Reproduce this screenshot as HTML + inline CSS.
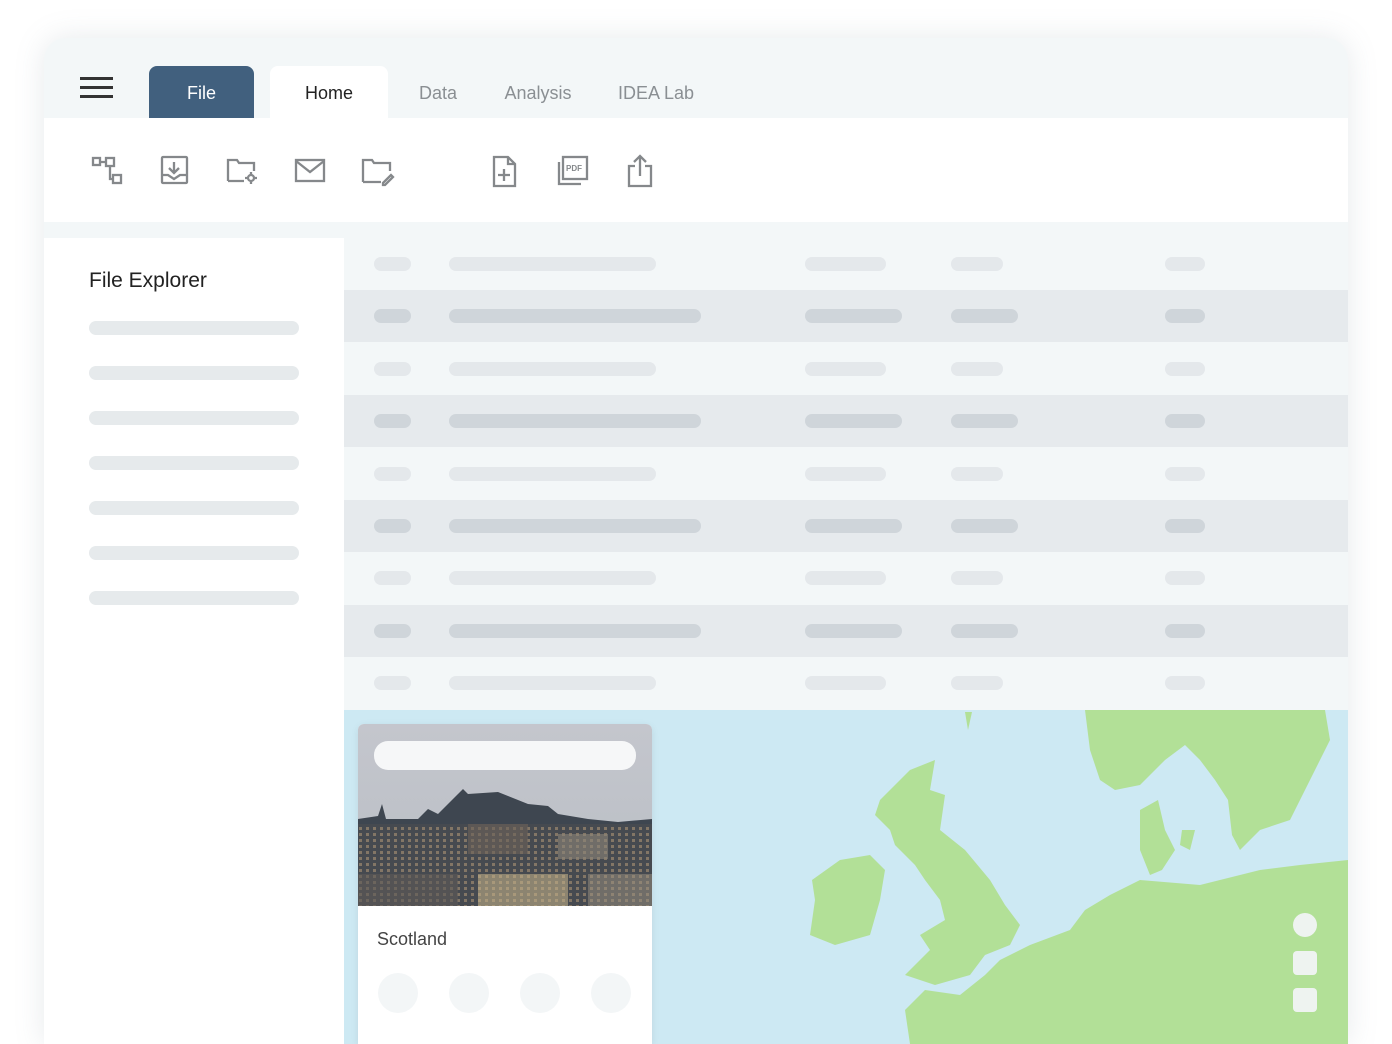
<!DOCTYPE html>
<html style="height:1044px;overflow:hidden"><head><style>
body{margin:0;width:1392px;height:1044px;background:#fff;position:relative;overflow:hidden;font-family:"Liberation Sans",sans-serif}
.abs{position:absolute}
.card{left:44px;top:38px;width:1304px;height:1006px;border-radius:22px 22px 0 0;background:#f3f7f8;box-shadow:0 0 30px rgba(120,140,150,.18);overflow:hidden}
.tab{position:absolute;top:28px;height:52px;font-size:18px;line-height:54px;text-align:center;color:#8a8f93}
.bar{position:absolute;height:14px;border-radius:7px}
.row{position:absolute;left:300px;width:1004px;height:52px}
svg.ic{position:absolute;fill:none;stroke:#85888b;stroke-width:2.3}
</style></head><body>
<div class="abs card">
 <div class="abs" style="left:36px;top:39px;width:33px;height:3px;background:#333;box-shadow:0 9px 0 #333,0 18px 0 #333"></div>
 <div class="tab" style="left:105px;width:105px;background:#41607e;color:#fff;border-radius:8px 8px 0 0">File</div>
 <div class="tab" style="left:226px;width:118px;background:#fff;color:#222;border-radius:8px 8px 0 0">Home</div>
 <div class="tab" style="left:368px;width:52px">Data</div>
 <div class="tab" style="left:456px;width:76px">Analysis</div>
 <div class="tab" style="left:572px;width:80px">IDEA Lab</div>
 <div class="abs" style="left:0;top:80px;width:1304px;height:104px;background:#fff"></div>
 <div class="abs" style="left:0;top:200px;width:300px;height:806px;background:#fff"></div>
 <div class="abs" style="left:45px;top:231px;font-size:21px;color:#222">File Explorer</div>
 <div class="bar" style="left:45px;top:283px;width:210px;background:#e6eaec"></div>
 <div class="bar" style="left:45px;top:328px;width:210px;background:#e6eaec"></div>
 <div class="bar" style="left:45px;top:373px;width:210px;background:#e6eaec"></div>
 <div class="bar" style="left:45px;top:418px;width:210px;background:#e6eaec"></div>
 <div class="bar" style="left:45px;top:463px;width:210px;background:#e6eaec"></div>
 <div class="bar" style="left:45px;top:508px;width:210px;background:#e6eaec"></div>
 <div class="bar" style="left:45px;top:553px;width:210px;background:#e6eaec"></div>
</div>
<svg class="ic" style="left:90px;top:155px" width="36" height="32"><rect x="3" y="3" width="7" height="7"/><rect x="16" y="3" width="8" height="8"/><rect x="23" y="20" width="8" height="8"/><path d="M10 7h6M20 11v13h3"/></svg>
<svg class="ic" style="left:160px;top:155px" width="30" height="32"><rect x="2" y="2" width="25" height="26" rx="1"/><path d="M14 7v11M9 13l5 5 5-5M2 20h6l6 4 6-4h7"/></svg>
<svg class="ic" style="left:226px;top:157px" width="36" height="30"><path d="M2 24V3h9l2 3h15v8M2 24h16"/><circle cx="25" cy="21" r="3"/><path d="M25 15v2M25 25v2M19 21h2M29 21h2"/></svg>
<svg class="ic" style="left:294px;top:157px" width="32" height="28"><rect x="2" y="3" width="28" height="21"/><path d="M2 4l14 11 14-11"/></svg>
<svg class="ic" style="left:361px;top:157px" width="36" height="30"><path d="M2 25V3h9l2 3h16v8M2 25h18"/><path d="M22 26l8-8 2 2-8 8h-2z"/></svg>
<svg class="ic" style="left:491px;top:155px" width="28" height="34"><path d="M3 2h14l7 7v22H3z"/><path d="M17 2v7h7M13 14v12M7 20h12"/></svg>
<svg class="ic" style="left:556px;top:154px" width="34" height="34"><rect x="7" y="3" width="24" height="22"/><path d="M3 8v22h22"/><text x="10" y="17" font-size="8" font-weight="bold" fill="#85888b" stroke="none" font-family="Liberation Sans">PDF</text></svg>
<svg class="ic" style="left:625px;top:153px" width="30" height="36"><path d="M10 13H4v20h22V13h-6M15 3v20M9 9l6-6 6 6"/></svg>
<div class="abs" style="left:344px;top:238px;width:1004px;height:472px;background:#f3f7f8">
 <div class="row" style="left:0;top:52px;background:#e6eaed"></div>
 <div class="row" style="left:0;top:157px;background:#e6eaed"></div>
 <div class="row" style="left:0;top:262px;background:#e6eaed"></div>
 <div class="row" style="left:0;top:367px;background:#e6eaed"></div>
</div>
<div id="bars"></div>
<script>
let h='';for(let i=0;i<9;i++){let y=238+i*52.4+19;let d=i%2==1;let c=d?'#cfd5da':'#e4e8eb';
h+=`<div class="bar" style="left:374px;top:${y}px;width:37px;background:${c}"></div>`;
h+=`<div class="bar" style="left:449px;top:${y}px;width:${d?252:207}px;background:${c}"></div>`;
h+=`<div class="bar" style="left:805px;top:${y}px;width:${d?97:81}px;background:${c}"></div>`;
h+=`<div class="bar" style="left:951px;top:${y}px;width:${d?67:52}px;background:${c}"></div>`;
h+=`<div class="bar" style="left:1165px;top:${y}px;width:40px;background:${c}"></div>`;}
document.getElementById('bars').innerHTML=h;
</script>
<svg class="abs" style="left:344px;top:710px" width="1004" height="334" viewBox="344 710 1004 334">
<rect x="344" y="710" width="1004" height="334" fill="#cde9f3"/>
<g fill="#b2e097">
<path d="M1085 710H1325L1330 740L1305 790L1290 820L1260 830L1240 850L1232 835L1228 800L1215 780L1200 760L1185 745L1165 760L1140 785L1115 790L1100 780L1090 750Z"/>
<path d="M1140 810L1158 800L1165 830L1175 850L1162 870L1150 875L1140 850Z"/>
<path d="M1182 830L1195 830L1190 850L1180 845Z"/>
<path d="M1348 860V1044H910L905 1010L925 990L960 995L985 975L1000 960L1030 945L1070 930L1085 910L1110 895L1140 880L1200 885L1260 870L1300 865Z"/>
<path d="M910 770L935 760L930 790L945 795L940 830L965 850L990 880L1005 905L1020 925L1010 945L985 955L970 975L935 985L905 975L930 950L920 935L945 920L940 900L925 880L915 865L905 855L895 845L890 830L875 815L880 800L890 790Z"/>
<path d="M840 860L870 855L885 870L880 900L870 935L835 945L810 935L815 900L812 880Z"/>
<path d="M965 712L972 712L968 730Z"/>
<path d="M1300 760L1310 770L1298 795L1290 790Z"/>
</g>
<circle cx="1305" cy="925" r="12" fill="#eef3f0"/>
<rect x="1293" y="951" width="24" height="24" rx="4" fill="#eef3f0"/>
<rect x="1293" y="988" width="24" height="24" rx="4" fill="#eef3f0"/>
</svg>
<div class="abs" style="left:358px;top:724px;width:294px;height:320px;background:#fff;border-radius:6px 6px 0 0;overflow:hidden;box-shadow:0 2px 8px rgba(0,0,0,.08)">
 <svg class="abs" style="left:0;top:0" width="294" height="182">
  <defs><linearGradient id="sk" x1="0" y1="0" x2="0" y2="1"><stop offset="0" stop-color="#c4c6cd"/><stop offset="1" stop-color="#b9bec4"/></linearGradient>
  <pattern id="win" width="7" height="6" patternUnits="userSpaceOnUse"><rect width="7" height="6" fill="#4a4c50"/><rect x="1" y="1" width="3" height="3" fill="#a08a70"/></pattern></defs>
  <rect width="294" height="182" fill="url(#sk)"/>
  <path d="M0 95L20 92L24 80L28 95L60 95L70 85L80 90L100 70L105 65L110 70L140 68L150 72L170 80L190 82L200 90L230 95L260 98L294 95V182H0Z" fill="#3e4650"/>
  <rect x="0" y="100" width="294" height="82" fill="url(#win)" opacity=".7"/>
  <rect x="110" y="100" width="60" height="30" fill="#6d6258" opacity=".6"/>
  <rect x="200" y="110" width="50" height="25" fill="#8c8578" opacity=".6"/>
  <rect x="120" y="150" width="90" height="32" fill="#c7b58a" opacity=".55"/>
  <rect x="0" y="150" width="100" height="32" fill="#5d5a56" opacity=".6"/>
  <rect x="230" y="150" width="64" height="32" fill="#9a9080" opacity=".5"/>
 </svg>
 <div class="abs" style="left:16px;top:17px;width:262px;height:29px;border-radius:14px;background:#f6f7f8"></div>
 <div class="abs" style="left:19px;top:205px;font-size:18px;color:#444">Scotland</div>
 <div class="abs" style="left:20px;top:249px;width:40px;height:40px;border-radius:50%;background:#f3f6f7;box-shadow:71px 0 0 #f3f6f7,142px 0 0 #f3f6f7,213px 0 0 #f3f6f7"></div>
</div>
</body></html>
